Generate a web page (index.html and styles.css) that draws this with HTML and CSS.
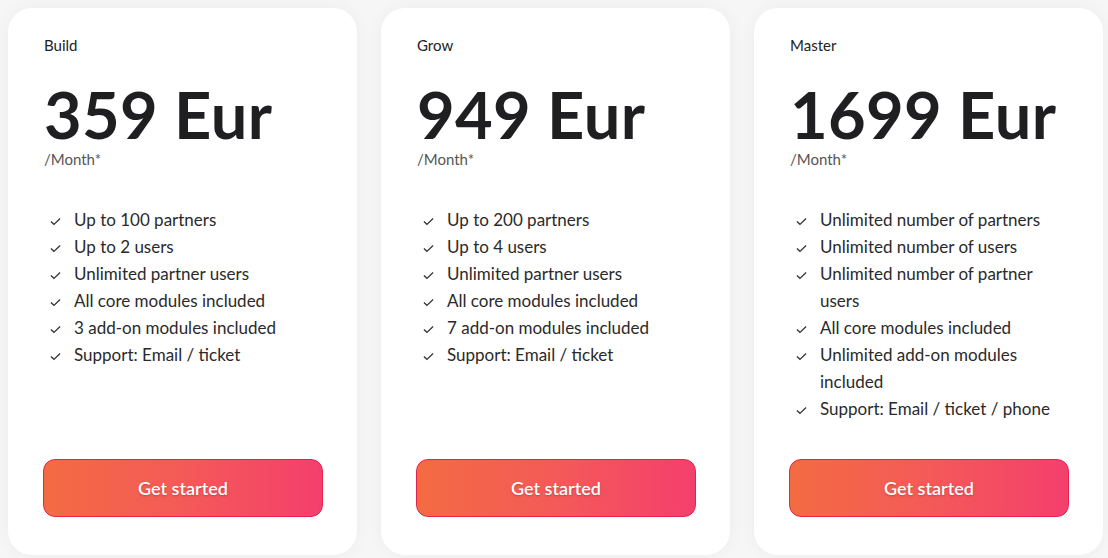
FILE: index.html
```html
<!DOCTYPE html>
<html>
<head>
<meta charset="utf-8">
<link rel="stylesheet" href="styles.css">
</head>
<body>
<div class="plans">
  <section class="card">
    <div class="plan">Build</div>
    <div class="price">359 Eur</div>
    <div class="per">/Month*</div>
    <ul class="features">
      <li><svg class="chk" viewBox="0 0 12 9"><path d="M1 4.5 L4.3 7.6 L11 1.2"/></svg><span>Up to 100 partners</span></li>
      <li><svg class="chk" viewBox="0 0 12 9"><path d="M1 4.5 L4.3 7.6 L11 1.2"/></svg><span>Up to 2 users</span></li>
      <li><svg class="chk" viewBox="0 0 12 9"><path d="M1 4.5 L4.3 7.6 L11 1.2"/></svg><span>Unlimited partner users</span></li>
      <li><svg class="chk" viewBox="0 0 12 9"><path d="M1 4.5 L4.3 7.6 L11 1.2"/></svg><span>All core modules included</span></li>
      <li><svg class="chk" viewBox="0 0 12 9"><path d="M1 4.5 L4.3 7.6 L11 1.2"/></svg><span>3 add-on modules included</span></li>
      <li><svg class="chk" viewBox="0 0 12 9"><path d="M1 4.5 L4.3 7.6 L11 1.2"/></svg><span>Support: Email / ticket</span></li>
    </ul>
    <button class="btn">Get started</button>
  </section>
  <section class="card">
    <div class="plan">Grow</div>
    <div class="price">949 Eur</div>
    <div class="per">/Month*</div>
    <ul class="features">
      <li><svg class="chk" viewBox="0 0 12 9"><path d="M1 4.5 L4.3 7.6 L11 1.2"/></svg><span>Up to 200 partners</span></li>
      <li><svg class="chk" viewBox="0 0 12 9"><path d="M1 4.5 L4.3 7.6 L11 1.2"/></svg><span>Up to 4 users</span></li>
      <li><svg class="chk" viewBox="0 0 12 9"><path d="M1 4.5 L4.3 7.6 L11 1.2"/></svg><span>Unlimited partner users</span></li>
      <li><svg class="chk" viewBox="0 0 12 9"><path d="M1 4.5 L4.3 7.6 L11 1.2"/></svg><span>All core modules included</span></li>
      <li><svg class="chk" viewBox="0 0 12 9"><path d="M1 4.5 L4.3 7.6 L11 1.2"/></svg><span>7 add-on modules included</span></li>
      <li><svg class="chk" viewBox="0 0 12 9"><path d="M1 4.5 L4.3 7.6 L11 1.2"/></svg><span>Support: Email / ticket</span></li>
    </ul>
    <button class="btn">Get started</button>
  </section>
  <section class="card">
    <div class="plan">Master</div>
    <div class="price">1699 Eur</div>
    <div class="per">/Month*</div>
    <ul class="features">
      <li><svg class="chk" viewBox="0 0 12 9"><path d="M1 4.5 L4.3 7.6 L11 1.2"/></svg><span>Unlimited number of partners</span></li>
      <li><svg class="chk" viewBox="0 0 12 9"><path d="M1 4.5 L4.3 7.6 L11 1.2"/></svg><span>Unlimited number of users</span></li>
      <li><svg class="chk" viewBox="0 0 12 9"><path d="M1 4.5 L4.3 7.6 L11 1.2"/></svg><span>Unlimited number of partner users</span></li>
      <li><svg class="chk" viewBox="0 0 12 9"><path d="M1 4.5 L4.3 7.6 L11 1.2"/></svg><span>All core modules included</span></li>
      <li><svg class="chk" viewBox="0 0 12 9"><path d="M1 4.5 L4.3 7.6 L11 1.2"/></svg><span>Unlimited add-on modules included</span></li>
      <li><svg class="chk" viewBox="0 0 12 9"><path d="M1 4.5 L4.3 7.6 L11 1.2"/></svg><span>Support: Email / ticket / phone</span></li>
    </ul>
    <button class="btn">Get started</button>
  </section>
</div>
</body>
</html>
```

FILE: styles.css
```css
html, body {
  margin: 0;
  padding: 0;
  background: #f6f6f6;
  height: 558px;
  overflow: hidden;
}
body {
  font-family: Lato, "Open Sans", sans-serif;
  color: #222;
}
.plans {
  display: flex;
  gap: 24px;
  padding: 8px 0 0 8px;
}
.card {
  width: 349px;
  height: 547px;
  box-sizing: border-box;
  background: #fff;
  border-radius: 24px;
  box-shadow: 0 0 18px rgba(0, 0, 0, 0.045);
  padding: 27px 35px 38px 36px;
  display: flex;
  flex-direction: column;
}
.plan {
  font-size: 15px;
  line-height: 20px;
  color: #222;
}
.price {
  margin-top: 29px;
  font-size: 65px;
  font-weight: 700;
  line-height: 60px;
  color: #1f1f21;
  letter-spacing: 0.3px;
}
.per {
  font-size: 15px;
  line-height: 20px;
  color: #555;
  margin-top: 5px;
}
.features {
  list-style: none;
  margin: 37px 0 0 0;
  padding: 0;
  font-size: 17px;
  line-height: 27px;
  color: #2a2a2a;
}
.features li {
  display: flex;
  align-items: flex-start;
}
.chk {
  flex: none;
  width: 11px;
  height: 9px;
  margin: 11px 13px 0 6px;
  fill: none;
  stroke: #333;
  stroke-width: 1.4;
}
.btn {
  margin-top: auto;
  margin-left: -1px;
  width: 280px;
  height: 58px;
  border-radius: 12px;
  border: 1px solid #e2234a;
  background: linear-gradient(90deg, #f36b42 0%, #f45a58 50%, #f43f6d 100%);
  color: #fff;
  font-family: Lato, "Open Sans", sans-serif;
  font-size: 18px;
  font-weight: 600;
  text-shadow: 0 1px 2px rgba(120, 20, 20, 0.35);
  cursor: pointer;
}
```
